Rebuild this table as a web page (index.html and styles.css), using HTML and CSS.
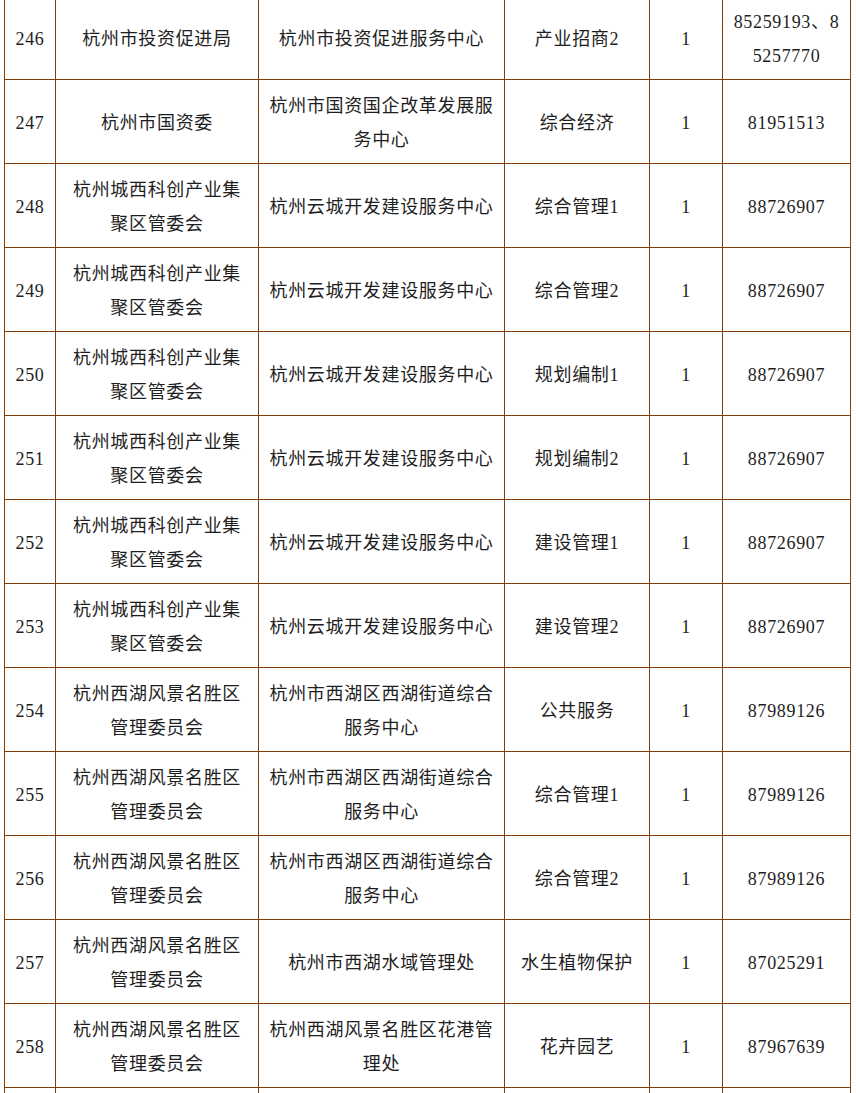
FILE: index.html
```html
<!DOCTYPE html>
<html lang="zh-CN">
<head>
<meta charset="utf-8">
<title>岗位表</title>
<link rel="stylesheet" href="styles.css">
</head>
<body>
<div class="sheet">
<table class="posts">
  <colgroup>
    <col class="c-no"><col class="c-dept"><col class="c-unit"><col class="c-post"><col class="c-num"><col class="c-tel">
  </colgroup>
  <tbody>
    <tr><td>246</td><td class="txt">杭州市投资促进局</td><td class="txt wide">杭州市投资促进服务中心</td><td class="txt">产业招商2</td><td>1</td><td class="tel">85259193、85257770</td></tr>
    <tr><td>247</td><td class="txt">杭州市国资委</td><td class="txt wide">杭州市国资国企改革发展服务中心</td><td class="txt">综合经济</td><td>1</td><td class="tel">81951513</td></tr>
    <tr><td>248</td><td class="txt">杭州城西科创产业集聚区管委会</td><td class="txt wide">杭州云城开发建设服务中心</td><td class="txt">综合管理1</td><td>1</td><td class="tel">88726907</td></tr>
    <tr><td>249</td><td class="txt">杭州城西科创产业集聚区管委会</td><td class="txt wide">杭州云城开发建设服务中心</td><td class="txt">综合管理2</td><td>1</td><td class="tel">88726907</td></tr>
    <tr><td>250</td><td class="txt">杭州城西科创产业集聚区管委会</td><td class="txt wide">杭州云城开发建设服务中心</td><td class="txt">规划编制1</td><td>1</td><td class="tel">88726907</td></tr>
    <tr><td>251</td><td class="txt">杭州城西科创产业集聚区管委会</td><td class="txt wide">杭州云城开发建设服务中心</td><td class="txt">规划编制2</td><td>1</td><td class="tel">88726907</td></tr>
    <tr><td>252</td><td class="txt">杭州城西科创产业集聚区管委会</td><td class="txt wide">杭州云城开发建设服务中心</td><td class="txt">建设管理1</td><td>1</td><td class="tel">88726907</td></tr>
    <tr><td>253</td><td class="txt">杭州城西科创产业集聚区管委会</td><td class="txt wide">杭州云城开发建设服务中心</td><td class="txt">建设管理2</td><td>1</td><td class="tel">88726907</td></tr>
    <tr><td>254</td><td class="txt">杭州西湖风景名胜区管理委员会</td><td class="txt wide">杭州市西湖区西湖街道综合服务中心</td><td class="txt">公共服务</td><td>1</td><td class="tel">87989126</td></tr>
    <tr><td>255</td><td class="txt">杭州西湖风景名胜区管理委员会</td><td class="txt wide">杭州市西湖区西湖街道综合服务中心</td><td class="txt">综合管理1</td><td>1</td><td class="tel">87989126</td></tr>
    <tr><td>256</td><td class="txt">杭州西湖风景名胜区管理委员会</td><td class="txt wide">杭州市西湖区西湖街道综合服务中心</td><td class="txt">综合管理2</td><td>1</td><td class="tel">87989126</td></tr>
    <tr><td>257</td><td class="txt">杭州西湖风景名胜区管理委员会</td><td class="txt wide">杭州市西湖水域管理处</td><td class="txt">水生植物保护</td><td>1</td><td class="tel">87025291</td></tr>
    <tr><td>258</td><td class="txt">杭州西湖风景名胜区管理委员会</td><td class="txt wide">杭州西湖风景名胜区花港管理处</td><td class="txt">花卉园艺</td><td>1</td><td class="tel">87967639</td></tr>
    <tr class="blank"><td></td><td></td><td></td><td></td><td></td><td></td></tr>
  </tbody>
</table>
</div>
</body>
</html>
```

FILE: styles.css
```css
html, body {
  margin: 0;
  padding: 0;
  background: #ffffff;
  overflow: hidden;
}

.sheet {
  padding-left: 4px;
  margin-top: -5px;
}

.posts {
  border-collapse: collapse;
  table-layout: fixed;
  width: 846px;
  font-family: "Liberation Serif", "Noto Sans CJK SC", serif;
  font-size: 18px;
  letter-spacing: 0.67px;
  line-height: 34px;
  color: #1e1e1e;
}

.c-no { width: 51px; }
.c-dept { width: 203px; }
.c-unit { width: 246px; }
.c-post { width: 145px; }
.c-num { width: 73px; }
.c-tel { width: 128px; }

.posts tr {
  height: 84px;
}

.posts td {
  border: 1px solid #843c0c;
  text-align: center;
  vertical-align: middle;
  padding: 3px 4px 0;
}

.posts td.txt {
  padding-left: 10px;
  padding-right: 10px;
}

.posts td.wide {
  padding-left: 8px;
  padding-right: 8px;
}

.posts td.tel {
  padding-left: 8px;
  padding-right: 8px;
  word-break: break-all;
}
```
